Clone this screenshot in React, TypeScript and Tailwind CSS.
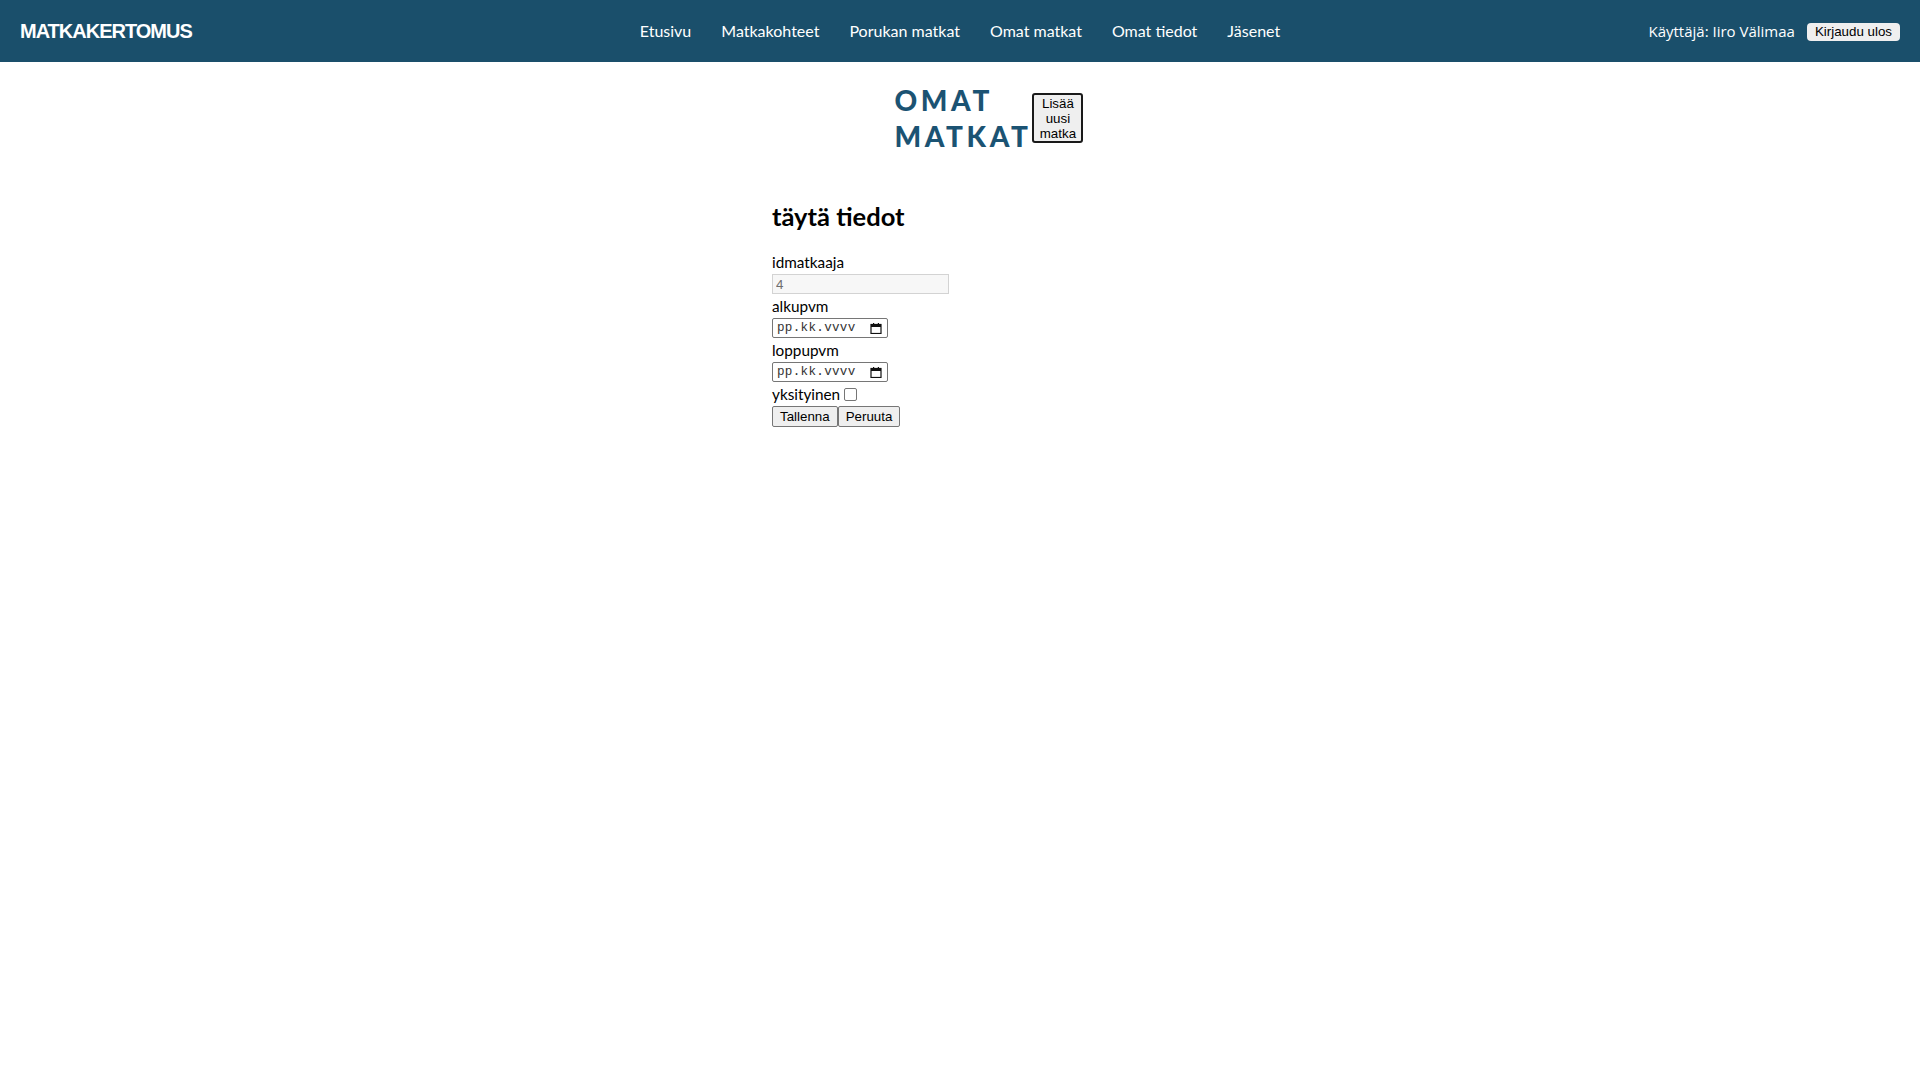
import React from 'react';

const navLinks = ['Etusivu', 'Matkakohteet', 'Porukan matkat', 'Omat matkat', 'Omat tiedot', 'Jäsenet'];

const CalendarIcon: React.FC = () => (
  <svg width="12" height="11" viewBox="0 0 12 11" className="shrink-0">
    <rect x="1" y="1.5" width="10" height="9" fill="none" stroke="#111" strokeWidth="1.2" />
    <rect x="1" y="1.5" width="10" height="2.5" fill="#111" />
    <rect x="3" y="0" width="1.2" height="2" fill="#111" />
    <rect x="7.8" y="0" width="1.2" height="2" fill="#111" />
  </svg>
);

const DateField: React.FC = () => (
  <div className="flex items-center justify-between w-[116px] h-[20px] border border-[#767676] rounded-[2px] pl-[4px] pr-[5px] bg-white">
    <span className="font-['Liberation_Mono',monospace] text-[12.6px] leading-none text-[#333] tracking-[0.3px] pt-[1px]">pp.kk.vvvv</span>
    <CalendarIcon />
  </div>
);

const App: React.FC = () => {
  return (
    <div className="min-h-screen bg-white">
      <header className="h-[62px] bg-[#1a4f6b] grid grid-cols-[1fr_auto_1fr] items-center px-5">
        <div className="font-['Liberation_Sans',Arial,sans-serif] font-bold text-[20px] tracking-[-1px] text-white">
          MATKAKERTOMUS
        </div>
        <nav className="flex items-center gap-[30px] font-['Lato',sans-serif] text-[16px] text-white">
          {navLinks.map((link) => (
            <a key={link} href="#" className="hover:underline">
              {link}
            </a>
          ))}
        </nav>
        <div className="flex items-center justify-end">
          <span className="font-['Open_Sans',sans-serif] text-[15px] text-white">Käyttäjä: Iiro Välimaa</span>
          <button className="ml-[12px] mt-[1px] h-[18px] px-[8px] rounded-[4px] bg-[#efefef] font-['Liberation_Sans',Arial,sans-serif] text-[13.33px] leading-none text-black">
            Kirjaudu ulos
          </button>
        </div>
      </header>

      <div className="flex justify-center items-center mt-[20px] pl-[58px]">
        <h1 className="w-min font-['Lato',sans-serif] font-black text-[28px] leading-[36px] tracking-[3.6px] text-[#1b5373]">
          OMAT MATKAT
        </h1>
        <button className="ml-[1px] w-[51px] h-[50px] border-2 border-[#1a1a1a] rounded-[3px] bg-[#efefef] font-['Liberation_Sans',Arial,sans-serif] text-[13.33px] leading-[15px] text-black">
          Lisää uusi matka
        </button>
      </div>

      <div className="w-[376px] mx-auto mt-[47px]">
        <h2 className="font-['Lato',sans-serif] font-bold text-[25.5px] leading-[30px] text-black mb-[19px]">täytä tiedot</h2>
        <form className="font-['Lato',sans-serif] text-[15.3px] text-black" onSubmit={(e) => e.preventDefault()}>
          <label className="block leading-[24px]">idmatkaaja</label>
          <input
            type="text"
            value="4"
            readOnly
            className="block w-[177px] h-[20px] border border-[#d3d3d3] bg-[#f7f7f7] px-[3px] font-['Liberation_Sans',Arial,sans-serif] text-[13.33px] text-[#6d6d6d] outline-none"
          />
          <label className="block leading-[24px]">alkupvm</label>
          <DateField />
          <label className="block leading-[24px]">loppupvm</label>
          <DateField />
          <div className="flex items-center h-[24px]">
            <span>yksityinen</span>
            <span className="ml-[4px] w-[13px] h-[13px] border border-[#767676] rounded-[2px] bg-white" />
          </div>
          <div className="flex">
            <button className="h-[21px] px-[7px] border border-[#767676] rounded-[2px] bg-[#efefef] font-['Liberation_Sans',Arial,sans-serif] text-[13.33px] leading-none text-black">
              Tallenna
            </button>
            <button className="h-[21px] px-[7px] border border-[#767676] rounded-[2px] bg-[#efefef] font-['Liberation_Sans',Arial,sans-serif] text-[13.33px] leading-none text-black">
              Peruuta
            </button>
          </div>
        </form>
      </div>
    </div>
  );
};

export default App;
